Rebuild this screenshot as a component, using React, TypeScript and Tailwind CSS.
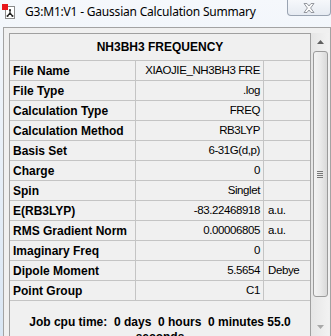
import React from "react";

const rows: { label: string; value: string; unit?: string }[] = [
  { label: "File Name", value: "XIAOJIE_NH3BH3 FRE" },
  { label: "File Type", value: ".log" },
  { label: "Calculation Type", value: "FREQ" },
  { label: "Calculation Method", value: "RB3LYP" },
  { label: "Basis Set", value: "6-31G(d,p)" },
  { label: "Charge", value: "0" },
  { label: "Spin", value: "Singlet" },
  { label: "E(RB3LYP)", value: "-83.22468918", unit: "a.u." },
  { label: "RMS Gradient Norm", value: "0.00006805", unit: "a.u." },
  { label: "Imaginary Freq", value: "0" },
  { label: "Dipole Moment", value: "5.5654", unit: "Debye" },
  { label: "Point Group", value: "C1" },
];

function WindowIcon() {
  return (
    <svg width="14" height="16" viewBox="0 0 14 16" className="shrink-0">
      <rect x="3.5" y="2.5" width="9" height="12" fill="#fff" stroke="#8a8a8a" />
      <rect x="0" y="0" width="6" height="6" fill="#e8161b" />
      <path d="M8 6 L8 9 M8 9 L5.5 12 M8 9 L10.5 12" stroke="#222" strokeWidth="1.2" fill="none" />
      <circle cx="8" cy="6" r="1" fill="#222" />
      <circle cx="5.5" cy="12" r="1" fill="#222" />
      <circle cx="10.5" cy="12" r="1" fill="#222" />
    </svg>
  );
}

function CloseButton() {
  return (
    <div className="ml-auto flex h-[16px] w-[44px] items-center justify-center rounded-b-[4px] border border-t-0 border-[#9aa4b2] bg-gradient-to-b from-[#f6f8fb] to-[#e6ebf2]">
      <svg width="12" height="10" viewBox="0 0 12 10">
        <path
          d="M1 0.5 H4 L6 3 L8 0.5 H11 L7.6 5 L11 9.5 H8 L6 7 L4 9.5 H1 L4.4 5 Z"
          fill="#fbfbfb"
          stroke="#8b8f96"
          strokeWidth="0.9"
          strokeLinejoin="round"
        />
      </svg>
    </div>
  );
}

function ScrollBar() {
  return (
    <div className="flex w-[18px] flex-col items-center bg-gradient-to-r from-[#e6e6e6] to-[#f2f2f2]">
      <div className="flex h-[17px] w-full items-center justify-center">
        <svg width="7" height="4" viewBox="0 0 7 4">
          <path d="M0 4 L3.5 0 L7 4 Z" fill="#606060" />
        </svg>
      </div>
      <div className="mt-[1px] flex h-[246px] w-[15px] items-center justify-center rounded-[3px] border border-[#9b9b9b] bg-gradient-to-r from-[#f3f3f3] via-[#eaeaea] to-[#d9d9d9]">
        <div className="flex flex-col gap-[1px]">
          <div className="h-[1px] w-[6px] bg-[#777]" />
          <div className="h-[1px] w-[6px] bg-[#777]" />
          <div className="h-[1px] w-[6px] bg-[#777]" />
          <div className="h-[1px] w-[6px] bg-[#777]" />
        </div>
      </div>
      <div className="mt-auto flex h-[17px] w-full items-center justify-center pb-[2px]">
        <svg width="7" height="4" viewBox="0 0 7 4">
          <path d="M0 0 L7 0 L3.5 4 Z" fill="#a8a8a8" />
        </svg>
      </div>
    </div>
  );
}

export default function App() {
  return (
    <div className="flex h-[336px] w-[331px] flex-col overflow-hidden bg-gradient-to-b from-[#f5f8fc] to-[#d9e6f4]">
      {/* Title bar */}
      <div className="flex h-[27px] shrink-0 items-start">
        <div className="ml-[2px] mt-[4px]">
          <WindowIcon />
        </div>
        <div className="ml-[9px] mt-[4px] text-[12px] leading-[16px] tracking-[-0.2px] text-black [font-family:'Noto_Sans',sans-serif]">
          G3:M1:V1 - Gaussian Calculation Summary
        </div>
        <CloseButton />
      </div>

      {/* Client area */}
      <div className="ml-[3px] flex min-h-0 flex-1 border border-b-0 border-[#a3a3a3] bg-[#f0f0f0] pl-[5px] pt-[5px] text-[12px] text-black [font-family:'Liberation_Sans',Arial,sans-serif]">
        <div className="flex w-[302px] shrink-0 flex-col border-l border-t border-r border-[#a0a0a0]">
          <div className="flex h-[26px] shrink-0 items-center justify-center font-bold">
            NH3BH3 FREQUENCY
          </div>
          {rows.map((r) => (
            <div key={r.label} className="flex h-[20px] shrink-0 border-t border-[#c4c4c4]">
              <div className="flex w-[126px] items-center border-r border-[#c4c4c4] pl-[3px] font-bold whitespace-nowrap">
                {r.label}
              </div>
              <div className="flex w-[128px] items-center justify-end overflow-hidden border-r border-[#c4c4c4] pr-[3px] text-[11.5px] tracking-[-0.4px] whitespace-nowrap">
                {r.value}
              </div>
              <div className="flex flex-1 items-center pl-[4px] text-[11.5px] tracking-[-0.4px]">{r.unit}</div>
            </div>
          ))}
          <div className="flex flex-1 justify-center border-t border-[#c4c4c4] pt-[14px]">
            <div className="w-[290px] whitespace-pre-wrap text-center font-bold leading-[15px]">
              {"Job cpu time:  0 days  0 hours  0 minutes 55.0 seconds"}
            </div>
          </div>
        </div>
        <ScrollBar />
      </div>
    </div>
  );
}
